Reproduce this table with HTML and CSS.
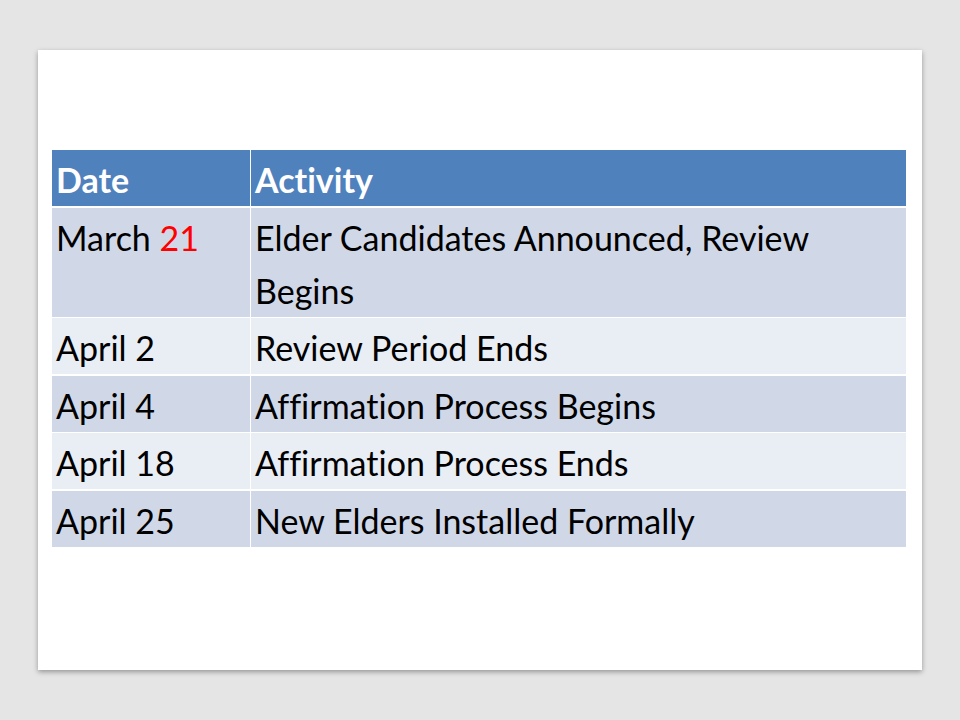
FILE: index.html
```html
<!DOCTYPE html>
<html>
<head>
<meta charset="utf-8">
<link rel="stylesheet" href="styles.css">
</head>
<body>
<div class="slide">
  <div class="table">
    <div class="cell head">Date</div>
    <div class="cell head">Activity</div>
    <div class="cell odd">March <span class="red">21</span></div>
    <div class="cell odd">Elder Candidates Announced, Review Begins</div>
    <div class="cell even">April 2</div>
    <div class="cell even">Review Period Ends</div>
    <div class="cell odd">April 4</div>
    <div class="cell odd">Affirmation Process Begins</div>
    <div class="cell even">April 18</div>
    <div class="cell even">Affirmation Process Ends</div>
    <div class="cell odd">April 25</div>
    <div class="cell odd">New Elders Installed Formally</div>
  </div>
</div>
</body>
</html>
```
FILE: styles.css
```css
html, body {
  margin: 0;
  padding: 0;
  background: #e5e5e5;
  width: 960px;
  height: 720px;
  overflow: hidden;
}
body {
  padding: 50px 0 0 38px;
  box-sizing: border-box;
}
.slide {
  width: 884px;
  height: 620px;
  background: #fff;
  box-shadow: 0 2px 5px rgba(0,0,0,0.35);
  padding: 100px 16px 0 14px;
  box-sizing: border-box;
}
.table {
  display: grid;
  grid-template-columns: 197.5px 655px;
  gap: 1.5px;
  background: #fff;
  font-family: Lato, "Open Sans", sans-serif;
  font-size: 34px;
  line-height: 53px;
  color: #000;
  font-variant-ligatures: none;
}
.cell {
  padding: 3px 8px 0 4px;
}
.head {
  background: #4f81bd;
  color: #fff;
  font-weight: bold;
}
.odd { background: #d0d8e8; }
.even { background: #e9edf4; }
.red { color: #ff0000; }
```
